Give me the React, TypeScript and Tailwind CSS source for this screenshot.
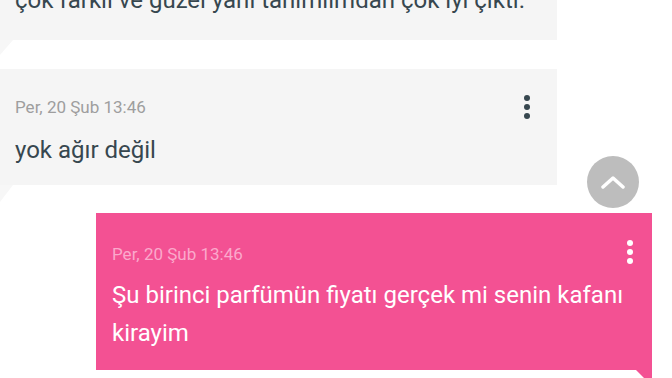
import React from "react";

function Dots({ color }: { color: string }) {
  return (
    <svg width="8" height="24" viewBox="0 0 8 24" className="shrink-0">
      <circle cx="4" cy="3" r="3" fill={color} />
      <circle cx="4" cy="12" r="3" fill={color} />
      <circle cx="4" cy="21" r="3" fill={color} />
    </svg>
  );
}

export default function App() {
  return (
    <div
      className="relative w-[672px] h-[378px] overflow-hidden bg-white flex flex-col"
      style={{ fontFamily: "Roboto, 'Noto Sans', sans-serif" }}
    >
      {/* bubble 1 (cut off at top) */}
      <div className="relative w-[557px] h-[40px] shrink-0 bg-[#f5f5f5] flex items-end pl-[15px] pb-[26px]">
        <p className="text-[24px] leading-[28px] text-[#37474f] whitespace-nowrap">
          çok farklı ve güzel yani tanımlımdan çok iyi çıktı.
        </p>
        <svg className="absolute left-0 top-full" width="14" height="16" viewBox="0 0 14 16">
          <polygon points="0,0 13,0 0,15" fill="#f7f7f7" />
        </svg>
      </div>

      {/* bubble 2 */}
      <div className="relative mt-[29px] w-[557px] h-[116px] shrink-0 bg-[#f5f5f5] flex flex-col pl-[15px] pr-[26px] pt-[26px]">
        <div className="flex items-start justify-between">
          <span className="text-[17px] leading-[20px] mt-[2px] text-[#9e9e9e]">Per, 20 Şub 13:46</span>
          <Dots color="#37474f" />
        </div>
        <p className="mt-[16px] text-[24px] leading-[30px] text-[#37474f]">yok ağır değil</p>
        <svg className="absolute left-0 top-full" width="14" height="18" viewBox="0 0 14 18">
          <polygon points="0,0 13,0 0,17" fill="#f7f7f7" />
        </svg>
      </div>

      {/* pink bubble */}
      <div className="relative mt-[28px] ml-[96px] w-[556px] h-[157px] shrink-0 bg-[#f35193] flex flex-col pl-[16px] pr-[18px] pt-[27px]">
        <div className="flex items-start justify-between">
          <span className="text-[17px] leading-[20px] mt-[4px] text-[#fba9cc]">Per, 20 Şub 13:46</span>
          <Dots color="#ffffff" />
        </div>
        <p className="mt-[12px] text-[24px] leading-[38px] text-white">
          Şu birinci parfümün fiyatı gerçek mi senin kafanı kirayim
        </p>
        <svg className="absolute right-0 top-full" width="16" height="16" viewBox="0 0 16 16">
          <polygon points="0,0 16,0 16,16" fill="#f35193" />
        </svg>
      </div>

      {/* scroll-to-top button */}
      <div className="absolute left-[587px] top-[156px] w-[52px] h-[52px] rounded-full bg-[#bdbdbd] flex items-center justify-center">
        <svg width="24" height="14" viewBox="0 0 24 14">
          <polyline points="2,12 12,3 22,12" fill="none" stroke="#ffffff" strokeWidth="3.5" strokeLinecap="round" strokeLinejoin="round" />
        </svg>
      </div>
    </div>
  );
}
